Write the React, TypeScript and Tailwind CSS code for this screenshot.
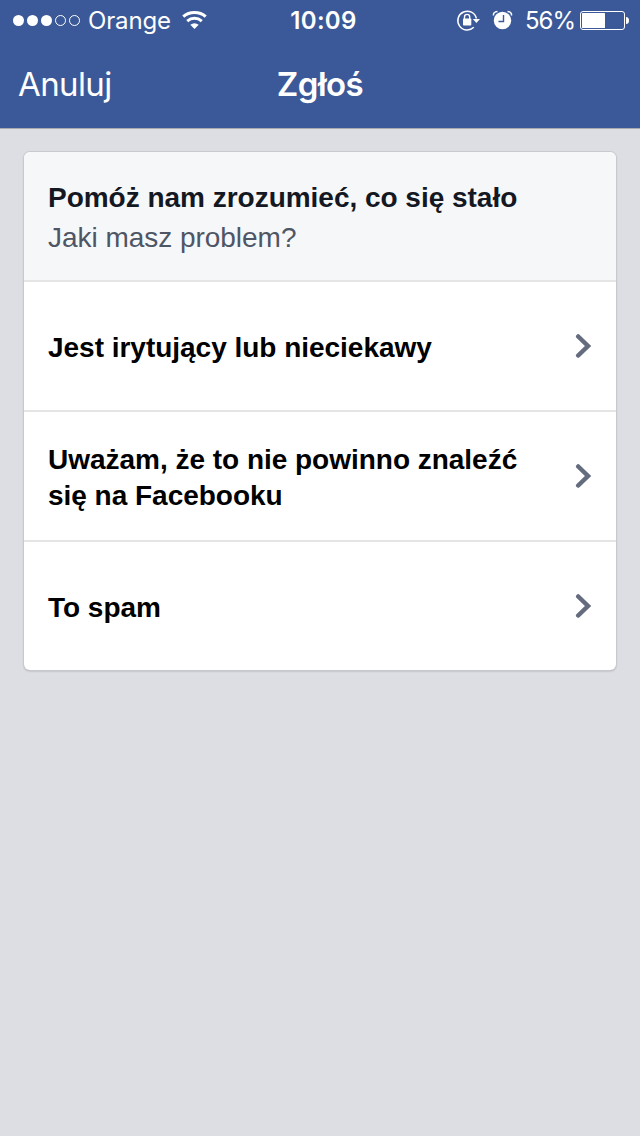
import type { ReactNode } from "react";

function StatusBar() {
  return (
    <div className="grid h-10 grid-cols-[276px_95px_269px] grid-rows-[40px] text-[24px] leading-[38px] text-white">
      <div className="flex items-center pl-3">
        <svg className="h-10 w-[76px] shrink-0" viewBox="0 0 76 40" fill="white">
          <circle cx="6.500" cy="20.500" r="5.500" />
          <circle cx="20.500" cy="20.500" r="5.500" />
          <circle cx="34.500" cy="20.500" r="5.500" />
          <circle cx="48.500" cy="20.500" r="5" fill="none" stroke="white" />
          <circle cx="62.500" cy="20.500" r="5" fill="none" stroke="white" />
        </svg>
        <span className="w-[94px] pt-[2px] tracking-[-0.15px]">Orange</span>
        <svg className="h-10 w-[26px] shrink-0" viewBox="182 0 26 40" fill="none" stroke="white">
          <path d="M183.300 16.600 Q188 12.500 194.500 12.500 T205.700 16.600" strokeWidth="3.200" />
          <path d="M187.200 21.100 Q190.500 18.300 194.500 18.300 T201.800 21.100" strokeWidth="3" />
          <path d="M190.300 24.800 Q194.500 21.600 198.700 24.800 L194.500 29Z" fill="white" stroke="none" />
        </svg>
      </div>
      <span className="pt-[2px] text-center font-semibold tracking-[0.3px]">10:09</span>
      <div className="flex items-center pl-[85px]">
        <svg className="h-10 w-[69px] shrink-0" viewBox="456 0 69 40" fill="white">
          <path d="M473.800 27.300 A9.400 9.400 0 1 1 476.400 18.500" fill="none" stroke="white" strokeWidth="1.500" />
          <path d="M472.800 19 H480 L476.400 23Z" />
          <rect x="463" y="18.500" width="8.300" height="7" rx=".7" />
          <path d="M464.500 19 V17 a2.600 2.600 0 0 1 5.200 0 V19" fill="none" stroke="white" strokeWidth="1.400" />
          <circle cx="502.500" cy="20.500" r="8.700" />
          <path d="M493.500 15.500 Q493 12 497.500 11.500 M507.500 11.500 Q512 12 511.500 15.500" fill="none" stroke="white" strokeWidth="1.500" />
          <path d="M503.500 15 V21.500 H498.500" fill="none" stroke="#3b5998" strokeWidth="1.400" />
        </svg>
        <span className="w-[55px] pt-[2px] tracking-[-1px]">56%</span>
        <svg className="h-10 w-[50px] shrink-0" viewBox="580 0 50 40" fill="white">
          <rect x="580.500" y="11.500" width="44" height="18" rx="2.500" fill="none" stroke="white" />
          <rect x="582" y="13" width="23" height="15" rx=".5" />
          <path d="M626 17 q3 0 3 3.500 q0 3.500 -3 3.500Z" />
        </svg>
      </div>
    </div>
  );
}

function Row({ children }: { children: ReactNode }) {
  return (
    <button className="flex h-[130px] w-full items-center justify-between border-t-2 border-[#e5e5e5] pl-6 pr-6 text-left text-[28px] font-bold leading-9 text-black">
      <span className="w-[490px] pt-1 tracking-[-0.02px]">{children}</span>
      <svg className="h-6 w-[17px] shrink-0" viewBox="0 0 17 24" fill="none" stroke="#646c7e" strokeWidth="4.500" strokeLinecap="round">
        <path d="M3.200 2.500 L13 12 L3.200 21.500" />
      </svg>
    </button>
  );
}

export default function App() {
  return (
    <main className="h-[1136px] w-[640px] bg-[#dcdee3] font-['Liberation_Sans',sans-serif]">
      <header className="h-[129px] border-b border-[#a9aaaf] bg-[#3b5998] font-[Inter,sans-serif] text-white">
        <StatusBar />
        <div className="grid h-[88px] grid-cols-3 items-center px-[18px] pt-[2px] text-[33px]">
          <button className="text-left font-normal tracking-[-0.6px]">Anuluj</button>
          <h1 className="text-center font-semibold tracking-[-0.5px]">Zgłoś</h1>
        </div>
      </header>
      <section className="mx-6 mt-[23px] overflow-hidden rounded-md bg-white shadow-[0_0_0_1px_#c8c9ce,0_1px_2px_#999]">
        <div className="h-[128px] bg-[#f6f7f9] px-6 pt-[26px] text-[28px] leading-10">
          <h2 className="font-bold tracking-[-0.02px] text-[#141823]">Pomóż nam zrozumieć, co się stało</h2>
          <p className="tracking-[-0.03px] text-[#4e5665]">Jaki masz problem?</p>
        </div>
        <Row>Jest irytujący lub nieciekawy</Row>
        <Row>Uważam, że to nie powinno znaleźć się na Facebooku</Row>
        <Row>To spam</Row>
      </section>
    </main>
  );
}
